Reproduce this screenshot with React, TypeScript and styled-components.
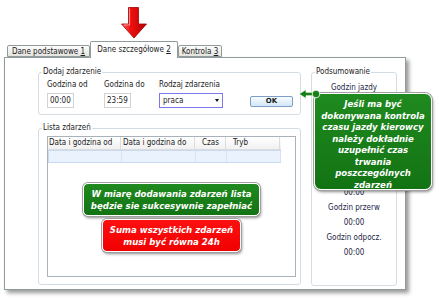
import React from "react"
import styled, { createGlobalStyle } from "styled-components"

const GlobalStyle = createGlobalStyle`
  html, body {
    margin: 0;
    padding: 0;
    background: #ffffff;
  }
  body {
    font-family: "DejaVu Sans Condensed", "DejaVu Sans", sans-serif;
    font-stretch: condensed;
    font-size: 8px;
    color: #1b1b1b;
  }
`

const Page = styled.div`
  width: 439px;
  height: 301px;
  overflow: hidden;
`

const ArrowRow = styled.div`
  height: 41px;
  box-sizing: border-box;
  padding: 7px 0 0 121px;

  svg {
    display: block;
  }
`

const TabStrip = styled.div`
  position: relative;
  z-index: 2;
  display: flex;
  align-items: flex-end;
  height: 16px;
  padding-left: 7px;
`

const Tab = styled.div<{ $active?: boolean; $w: number }>`
  box-sizing: border-box;
  width: ${({ $w }) => $w}px;
  height: ${({ $active }) => ($active ? "17px" : "12px")};
  margin-bottom: ${({ $active }) => ($active ? "-1px" : "0")};
  border: 1px solid #919b9c;
  border-bottom: ${({ $active }) => ($active ? "none" : "1px solid #919b9c")};
  border-radius: 2px 2px 0 0;
  background: ${({ $active }) =>
    $active ? "#ffffff" : "linear-gradient(#fdfdfd, #e4e4df)"};
  display: flex;
  align-items: center;
  justify-content: center;
  padding-bottom: ${({ $active }) => ($active ? "2px" : "0")};
  white-space: nowrap;
  color: #1b1b1b;

  u {
    text-decoration-thickness: 1px;
  }
`

const Panel = styled.div`
  position: relative;
  margin-left: 4px;
  width: 402px;
  height: 233px;
  box-sizing: border-box;
  border: 1px solid #919b9c;
  background: #ffffff;
  box-shadow: 3px 3px 4px rgba(0, 0, 0, 0.4);
  display: flex;
  gap: 10px;
  padding: 8px 0 0 33px;
`

const LeftColumn = styled.div`
  width: 263px;
  display: flex;
  flex-direction: column;
  gap: 7px;
`

const Group = styled.fieldset<{ $w?: number; $h?: number }>`
  margin: 0;
  padding: 0;
  min-width: 0;
  box-sizing: border-box;
  ${({ $w }) => ($w ? `width: ${$w}px;` : "")}
  ${({ $h }) => ($h ? `height: ${$h}px;` : "")}
  border: 1px solid #d5dde4;
  border-radius: 3px;
`

const GroupTitle = styled.legend`
  margin-left: 3px;
  padding: 0 1px;
  line-height: 12px;
  font-size: 8px;
`

const FieldRow = styled.div`
  display: grid;
  grid-template-columns: 57px 55px 91px 43px;
  align-items: end;
  padding: 1px 0 6px 8px;
`

const Field = styled.div`
  display: flex;
  flex-direction: column;
`

const FieldLabel = styled.span`
  line-height: 11px;
  margin-bottom: 3px;
  white-space: nowrap;
`

const TimeBox = styled.input`
  box-sizing: border-box;
  width: 27px;
  height: 15px;
  margin: 0;
  padding: 0 0 0 2px;
  border: 1px solid #d3d3d3;
  font: inherit;
  color: #1b1b1b;
  background: #ffffff;
  outline: none;
`

const SelectBox = styled.div`
  box-sizing: border-box;
  width: 64px;
  height: 15px;
  border: 1px solid #7a78ea;
  display: flex;
  align-items: center;
  justify-content: space-between;
  padding: 0 3px 0 3px;
`

const Caret = styled.span`
  width: 0;
  height: 0;
  border-left: 2.5px solid transparent;
  border-right: 2.5px solid transparent;
  border-top: 3px solid #111111;
`

const OkButton = styled.button`
  box-sizing: border-box;
  width: 43px;
  height: 11px;
  margin: 0 0 1px 0;
  padding: 0;
  border: 1px solid #7d9fc4;
  border-radius: 2px;
  background: linear-gradient(#f7fbff, #d3e6f7);
  font: bold 7px/9px "DejaVu Sans", sans-serif;
  color: #1b1b1b;
`

const ListBody = styled.div`
  padding: 2px 4px 7px 8px;
`

const Table = styled.div`
  box-sizing: border-box;
  height: 141px;
  border: 1px solid #a9b1ba;
  display: flex;
  flex-direction: column;
`

const GridRow = styled.div<{ $head?: boolean }>`
  box-sizing: border-box;
  width: 233px;
  height: 13px;
  display: grid;
  grid-template-columns: 73px 74px 31px 54px;
  background: ${({ $head }) =>
    $head ? "linear-gradient(#ffffff, #f1f1f1)" : "#eaf3fd"};
  border: ${({ $head }) => ($head ? "none" : "1px solid #c9daf0")};
  border-bottom: 1px solid ${({ $head }) => ($head ? "#dcdcdc" : "#c9daf0")};
`

const Cell = styled.div<{ $head?: boolean; $indent?: number }>`
  border-right: 1px solid ${({ $head }) => ($head ? "#dcdcdc" : "#d6e3f3")};
  padding-left: ${({ $indent }) => $indent ?? 1}px;
  line-height: 12px;
  white-space: nowrap;
  overflow: hidden;
`

const NoteArea = styled.div`
  display: flex;
  flex-direction: column;
  align-items: center;
  gap: 3px;
  padding-top: 20px;
`

const Note = styled.div<{ $tone: "green" | "red" }>`
  box-sizing: border-box;
  background: ${({ $tone }) =>
    $tone === "red"
      ? "linear-gradient(#ff1010, #f00000)"
      : "linear-gradient(#1f8a1f, #137313)"};
  color: #ffffff;
  font: italic bold 9.5px/11.5px "DejaVu Sans Condensed", "DejaVu Sans", sans-serif;
  font-stretch: condensed;
  text-align: center;
  white-space: nowrap;
  border: 1px solid #ffffff;
  border-radius: 5px;
  box-shadow: 0 0 0 1px #a0a0a0, 1px 2px 3px rgba(0, 0, 0, 0.45);
  padding: 4px 7px;
`

const Callout = styled(Note)`
  position: absolute;
  z-index: 3;
  left: 309px;
  top: 35px;
  width: 118px;
  height: 97px;
  padding: 4px 2px;
  border-radius: 7px;

  svg {
    position: absolute;
    left: -17px;
    top: -7px;
  }
`

const SummaryList = styled.div`
  display: flex;
  flex-direction: column;
  align-items: center;
  padding-top: 2px;
`

const SummaryLine = styled.div<{ $skip?: number }>`
  line-height: 15px;
  margin-top: ${({ $skip }) => $skip ?? 0}px;
  color: #1d2546;
  white-space: nowrap;
`

function DownArrow() {
  return (
    <svg width="27" height="32" viewBox="0 0 27 32">
      <defs>
        <linearGradient id="arrowFill" x1="0" y1="0" x2="1" y2="0">
          <stop offset="0" stopColor="#ff6a6a" />
          <stop offset="0.35" stopColor="#f01010" />
          <stop offset="1" stopColor="#b80000" />
        </linearGradient>
      </defs>
      <path
        d="M7.5 0.5 H17.5 V17 H25.5 L13 31 L0.5 17 H7.5 Z"
        fill="url(#arrowFill)"
        stroke="#a30000"
        strokeWidth="0.8"
      />
      <path d="M8.6 1.5 V18 H3" fill="none" stroke="#ff9a9a" strokeWidth="1" />
    </svg>
  )
}

function Pointer() {
  return (
    <svg width="24" height="14" viewBox="0 0 24 14">
      <path
        d="M1 7 L8 2.5 V5.2 H15 V8.8 H8 V11.5 Z"
        fill="#168016"
        stroke="#ffffff"
        strokeWidth="0.8"
      />
      <circle cx="18" cy="7" r="3.8" fill="#168016" stroke="#ffffff" strokeWidth="0.8" />
    </svg>
  )
}

// rows hidden behind the callout are left out; $skip keeps the visible ones in place
const summary: { text: string; skip?: number }[] = [
  { text: "Godzin jazdy" },
  { text: "00:00", skip: 90 },
  { text: "Godzin przerw" },
  { text: "00:00" },
  { text: "Godzin odpocz." },
  { text: "00:00" },
]

export default function App() {
  return (
    <Page>
      <GlobalStyle />
      <ArrowRow>
        <DownArrow />
      </ArrowRow>

      <TabStrip>
        <Tab $w={83}>
          Dane podstawowe&nbsp;<u>1</u>
        </Tab>
        <Tab $w={88} $active>
          Dane szczegółowe&nbsp;<u>2</u>
        </Tab>
        <Tab $w={44}>
          Kontrola&nbsp;<u>3</u>
        </Tab>
      </TabStrip>

      <Panel>
        <LeftColumn>
          <Group>
            <GroupTitle>Dodaj zdarzenie</GroupTitle>
            <FieldRow>
              <Field>
                <FieldLabel>Godzina od</FieldLabel>
                <TimeBox readOnly value="00:00" />
              </Field>
              <Field>
                <FieldLabel>Godzina do</FieldLabel>
                <TimeBox readOnly value="23:59" />
              </Field>
              <Field>
                <FieldLabel>Rodzaj zdarzenia</FieldLabel>
                <SelectBox>
                  praca
                  <Caret />
                </SelectBox>
              </Field>
              <OkButton>OK</OkButton>
            </FieldRow>
          </Group>

          <Group>
            <GroupTitle>Lista zdarzeń</GroupTitle>
            <ListBody>
              <Table>
                <GridRow $head>
                  <Cell $head>Data i godzina od</Cell>
                  <Cell $head $indent={2}>Data i godzina do</Cell>
                  <Cell $head $indent={7}>Czas</Cell>
                  <Cell $head $indent={7}>Tryb</Cell>
                </GridRow>
                <GridRow>
                  <Cell />
                  <Cell />
                  <Cell />
                  <Cell />
                </GridRow>
                <NoteArea>
                  <Note $tone="green">
                    W miarę dodawania zdarzeń lista
                    <br />
                    będzie sie sukcesywnie zapełniać
                  </Note>
                  <Note $tone="red">
                    Suma wszystkich zdarzeń
                    <br />
                    musi być równa 24h
                  </Note>
                </NoteArea>
              </Table>
            </ListBody>
          </Group>
        </LeftColumn>

        <Group $w={86} $h={220}>
          <GroupTitle>Podsumowanie</GroupTitle>
          <SummaryList>
            {summary.map((row, i) => (
              <SummaryLine key={i} $skip={row.skip}>
                {row.text}
              </SummaryLine>
            ))}
          </SummaryList>
        </Group>

        <Callout $tone="green">
          <Pointer />
          Jeśli ma być
          <br />
          dokonywana kontrola
          <br />
          czasu jazdy kierowcy
          <br />
          należy dokładnie
          <br />
          uzupełnić czas
          <br />
          trwania
          <br />
          poszczególnych
          <br />
          zdarzeń
        </Callout>
      </Panel>
    </Page>
  )
}
